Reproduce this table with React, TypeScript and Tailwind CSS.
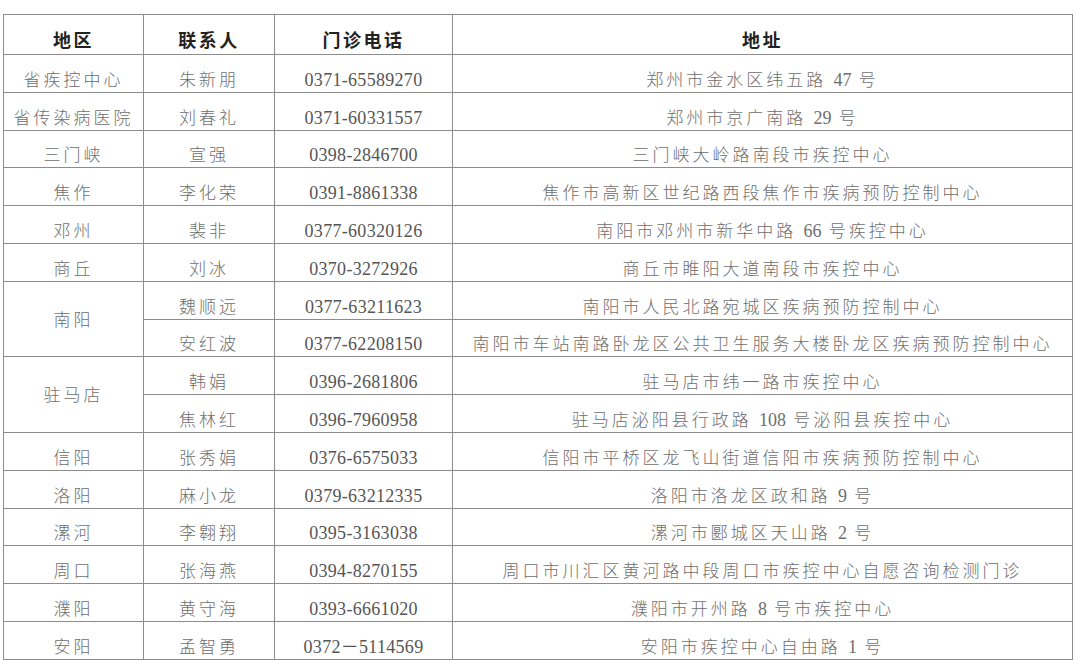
const rows = [
  { area: '省疾控中心', name: '朱新朋', phone: '0371-65589270', addr: '郑州市金水区纬五路 47 号' },
  { area: '省传染病医院', name: '刘春礼', phone: '0371-60331557', addr: '郑州市京广南路 29 号' },
  { area: '三门峡', name: '宣强', phone: '0398-2846700', addr: '三门峡大岭路南段市疾控中心' },
  { area: '焦作', name: '李化荣', phone: '0391-8861338', addr: '焦作市高新区世纪路西段焦作市疾病预防控制中心' },
  { area: '邓州', name: '裴非', phone: '0377-60320126', addr: '南阳市邓州市新华中路 66 号疾控中心' },
  { area: '商丘', name: '刘冰', phone: '0370-3272926', addr: '商丘市睢阳大道南段市疾控中心' },
  { area: '南阳', span: 2, name: '魏顺远', phone: '0377-63211623', addr: '南阳市人民北路宛城区疾病预防控制中心' },
  { area: null, name: '安红波', phone: '0377-62208150', addr: '南阳市车站南路卧龙区公共卫生服务大楼卧龙区疾病预防控制中心' },
  { area: '驻马店', span: 2, name: '韩娟', phone: '0396-2681806', addr: '驻马店市纬一路市疾控中心' },
  { area: null, name: '焦林红', phone: '0396-7960958', addr: '驻马店泌阳县行政路 108 号泌阳县疾控中心' },
  { area: '信阳', name: '张秀娟', phone: '0376-6575033', addr: '信阳市平桥区龙飞山街道信阳市疾病预防控制中心' },
  { area: '洛阳', name: '麻小龙', phone: '0379-63212335', addr: '洛阳市洛龙区政和路 9 号' },
  { area: '漯河', name: '李翱翔', phone: '0395-3163038', addr: '漯河市郾城区天山路 2 号' },
  { area: '周口', name: '张海燕', phone: '0394-8270155', addr: '周口市川汇区黄河路中段周口市疾控中心自愿咨询检测门诊' },
  { area: '濮阳', name: '黄守海', phone: '0393-6661020', addr: '濮阳市开州路 8 号市疾控中心' },
  { area: '安阳', name: '孟智勇', phone: '0372－5114569', addr: '安阳市疾控中心自由路 1 号' },
];

// digits keep normal spacing, chinese gets the wide tracking
const Addr = ({ text }: { text: string }) => (
  <span className="whitespace-pre">
    {text.split(/(\d+)/).map((part, i) =>
      /^\d+$/.test(part) ? (
        <span key={i} className="tracking-normal text-[18px]">{part}</span>
      ) : (
        <span key={i}>{part}</span>
      )
    )}
  </span>
);

const cell = 'border-r border-b border-[#8c8c8c] flex justify-center';
const head = `${cell} items-end pb-[4px] text-[18px] leading-none font-bold text-[#222] tracking-[2.5px]`;

export default function App() {
  return (
    <div
      className="w-[1080px] h-[661px] bg-white overflow-hidden pt-[14px] pl-[3px] text-[#6e6e6e]"
      style={{ fontFamily: '"Liberation Serif", "Noto Sans CJK SC", serif' }}
    >
      <div className="grid grid-cols-[140px_131px_178px_620px] grid-rows-[40px_repeat(16,37.8px)] border-l border-t border-[#8c8c8c] w-[1070px]">
        <div className={head}>地区</div>
        <div className={head}>联系人</div>
        <div className={head}>门诊电话</div>
        <div className={head}>地址</div>

        {rows.map((r, i) => (
          <div key={i} className="contents">
            {r.area !== null && (
              <div
                className={`${cell} text-[17px] font-light tracking-[3px] leading-none ${
                  r.span === 2 ? 'row-span-2 items-center pt-[2px]' : 'items-end pb-[3px]'
                }`}
              >
                {r.area}
              </div>
            )}
            <div className={`${cell} items-end pb-[3px] text-[17px] font-light tracking-[3px] leading-none`}>{r.name}</div>
            <div className={`${cell} items-end pb-[3px] text-[18px] tracking-[0.3px] leading-none text-[#555]`}>{r.phone}</div>
            <div className={`${cell} items-end pb-[3px] text-[17px] font-light tracking-[3px] leading-none`}>
              <Addr text={r.addr} />
            </div>
          </div>
        ))}
      </div>
    </div>
  );
}
